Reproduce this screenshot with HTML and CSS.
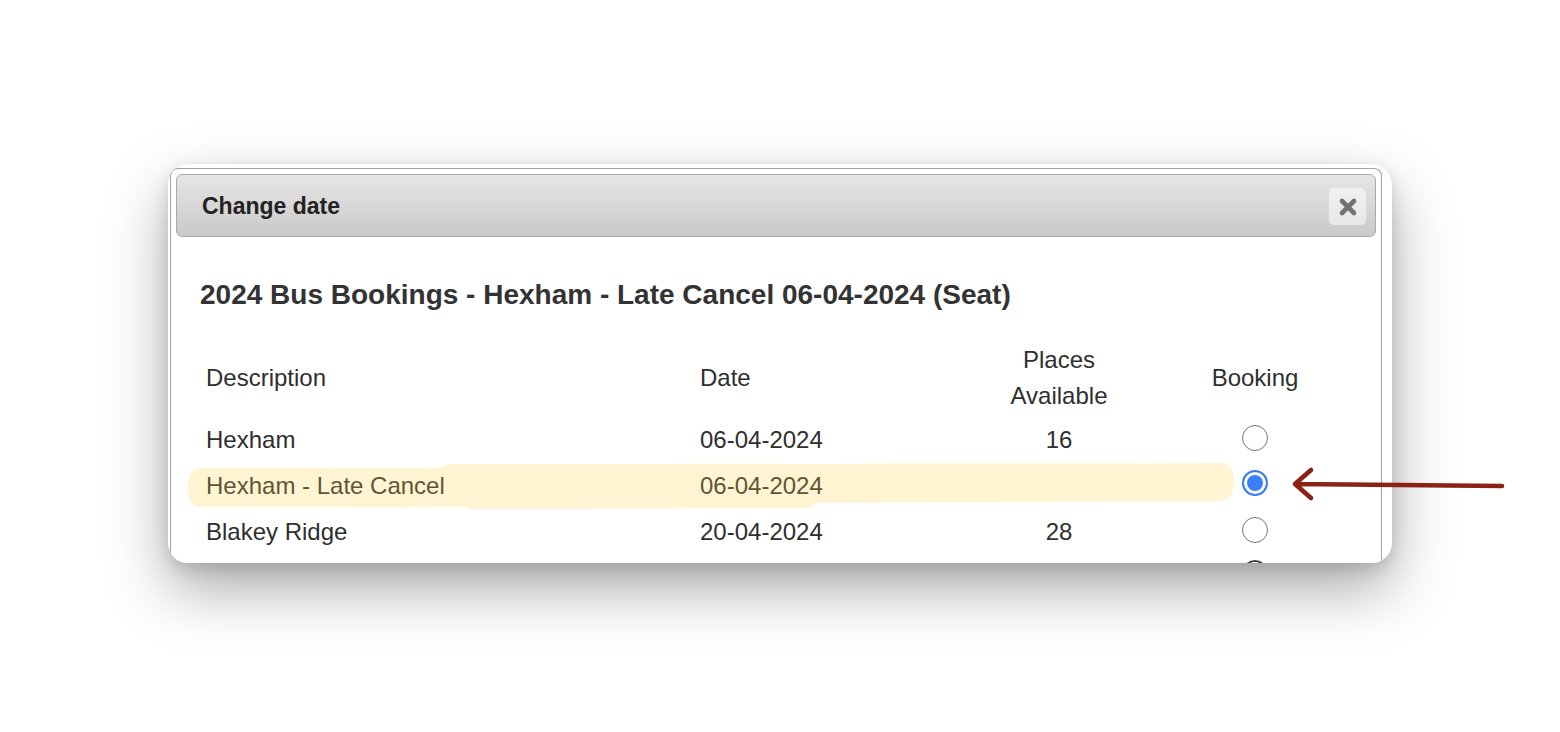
FILE: index.html
```html
<!DOCTYPE html>
<html lang="en">
<head>
<meta charset="utf-8">
<title>Change date</title>
<link rel="stylesheet" href="styles.css">
</head>
<body>
<div class="stage">
  <div class="card">
    <div class="dialog">
      <div class="titlebar">
        <span class="title">Change date</span>
        <button class="close" aria-label="Close">
          <svg width="20" height="20" viewBox="0 0 20 20"><path d="M4 4 L16 16 M16 4 L4 16" stroke="#727272" stroke-width="4.6" stroke-linecap="round" fill="none"/></svg>
        </button>
      </div>
      <div class="content">
        <h2 class="heading">2024 Bus Bookings - Hexham - Late Cancel 06-04-2024 (Seat)</h2>
        <div class="table">
          <div class="row head">
            <div class="cell desc">Description</div>
            <div class="cell date">Date</div>
            <div class="cell places">Places<br>Available</div>
            <div class="cell booking">Booking</div>
          </div>
          <div class="row">
            <div class="cell desc">Hexham</div>
            <div class="cell date">06-04-2024</div>
            <div class="cell places">16</div>
            <div class="cell booking"><span class="radio"></span></div>
          </div>
          <div class="row marked">
            <svg class="marker" width="1046" height="48" viewBox="0 0 1046 48"><path d="M12 6 C90 5 180 7 250 6 C254 5 256 3 262 2 C400 3 500 1 612 2 C760 1 900 2 1032 1 Q1046 1 1046 20 Q1046 39 1032 39 C900 40 760 40 627 41 C625 43 624 45 620 46 C500 47 380 47 282 47 C280 46 279 46 276 45 C180 46 90 45 12 45 Q0 45 0 25.5 Q0 6 12 6 Z" fill="#fff5d3"/></svg>
            <div class="cell desc">Hexham - Late Cancel</div>
            <div class="cell date">06-04-2024</div>
            <div class="cell places"></div>
            <div class="cell booking"><span class="radio on"></span></div>
          </div>
          <div class="row">
            <div class="cell desc">Blakey Ridge</div>
            <div class="cell date">20-04-2024</div>
            <div class="cell places">28</div>
            <div class="cell booking"><span class="radio"></span></div>
          </div>
          <div class="row">
            <div class="cell desc"></div>
            <div class="cell date"></div>
            <div class="cell places"></div>
            <div class="cell booking"><span class="radio dark"></span></div>
          </div>
        </div>
      </div>
    </div>
  </div>
  <svg class="arrow" width="220" height="40" viewBox="0 0 220 40"><path d="M7 19 L214 21 M7 19 L23 5 M7 19 L23 33" stroke="#8a2216" stroke-width="4.6" stroke-linecap="round" stroke-linejoin="round" fill="none"/></svg>
</div>
</body>
</html>
```
FILE: styles.css
```css
html, body {
  margin: 0;
  padding: 0;
  background: #ffffff;
}
body {
  font-family: "Liberation Sans", Arial, sans-serif;
  color: #333333;
}
.stage {
  position: relative;
  width: 1560px;
  height: 732px;
  padding: 164px 0 0 168px;
  box-sizing: border-box;
  overflow: hidden;
}
.card {
  width: 1224px;
  height: 399px;
  box-sizing: border-box;
  background: #ffffff;
  border-radius: 20px;
  overflow: hidden;
  padding: 4px 10px 0 2px;
  box-shadow: 0 26px 60px rgba(0, 0, 0, 0.34), 0 6px 16px rgba(0, 0, 0, 0.12), 0 0 1px rgba(0, 0, 0, 0.10);
}
.dialog {
  border: 1px solid #a3a3a3;
  border-bottom: 0;
  border-radius: 8px 8px 0 0;
  padding: 5px;
  height: 600px;
  background: #ffffff;
}
.titlebar {
  height: 63px;
  box-sizing: border-box;
  border: 1px solid #a9a9a9;
  border-radius: 6px;
  background: linear-gradient(#e6e6e6, #c9c9c9);
  display: flex;
  align-items: center;
  justify-content: space-between;
  padding: 2px 9px 0 25px;
}
.title {
  font-size: 23px;
  font-weight: bold;
  color: #222222;
}
.close {
  width: 37px;
  height: 37px;
  border: 0;
  border-radius: 5px;
  background: linear-gradient(#f0f0f0, #e8e8e8);
  display: flex;
  align-items: center;
  justify-content: center;
  padding: 0;
}
.close svg {
  filter: blur(0.5px);
}
.content {
  padding: 0 24px;
}
.heading {
  margin: 42px 0 0;
  font-size: 28px;
  line-height: 32px;
  font-weight: bold;
  color: #333333;
}
.table {
  margin-top: 28px;
  font-size: 24px;
  color: #2f2f2f;
}
.row {
  position: relative;
  display: grid;
  grid-template-columns: 494px 266px 198px 194px;
  height: 46px;
  align-items: center;
}
.row.head {
  height: 78px;
  line-height: 36px;
}
.cell {
  position: relative;
  z-index: 1;
}
.desc, .date {
  padding-left: 6px;
}
.places, .booking {
  text-align: center;
}
.marked .cell {
  color: #5f5634;
}
.marker {
  position: absolute;
  left: -12px;
  top: -1px;
  z-index: 0;
}
.radio {
  display: inline-block;
  width: 26px;
  height: 26px;
  box-sizing: border-box;
  border: 1.5px solid #767676;
  border-radius: 50%;
  background: #ffffff;
  vertical-align: middle;
  position: relative;
  top: -3px;
}
.radio.on {
  border: 2px solid #3a7cf5;
  background: #3a7ff7;
  box-shadow: inset 0 0 0 3px #ffffff;
  top: -4px;
}
.radio.dark {
  border-color: #444444;
  border-width: 2px;
  top: -6px;
}
.arrow {
  position: absolute;
  left: 1288px;
  top: 465px;
}
```
